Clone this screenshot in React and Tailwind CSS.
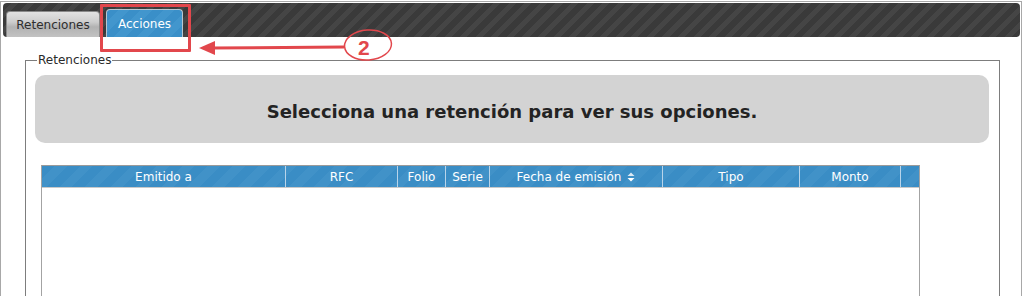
import React from 'react';

const columns = [
  { label: 'Emitido a' },
  { label: 'RFC' },
  { label: 'Folio' },
  { label: 'Serie' },
  { label: 'Fecha de emisión', sortable: true },
  { label: 'Tipo' },
  { label: 'Monto' },
  { label: '' },
];

const SortIcon = () => (
  <svg width="8" height="10" viewBox="0 0 8 10" className="ml-[6px] inline-block">
    <path d="M4 0.5 L7.5 4 L0.5 4 Z" fill="#dbe9f4" />
    <path d="M4 9.5 L7.5 6 L0.5 6 Z" fill="#ffffff" />
  </svg>
);

const Annotation = () => (
  <>
    {/* red box around the active tab */}
    <div className="absolute left-[100px] top-[4px] w-[91px] h-[48px] border-[3px] border-[#e2474c] rounded-[1px]" />
    <svg className="absolute left-0 top-0" width="420" height="70" viewBox="0 0 420 70">
      <line x1="212" y1="48" x2="344" y2="47" stroke="#e2474c" strokeWidth="3" />
      <path d="M199 48 L215 41 L215 55 Z" fill="#e2474c" />
      <ellipse cx="368" cy="45" rx="23.5" ry="15" fill="none" stroke="#e2474c" strokeWidth="1.5" transform="rotate(-4 368 45)" />
    </svg>
    <span className="absolute left-[358px] top-[36px] text-[21px] leading-[24px] font-bold text-[#e2474c] font-['Liberation_Sans',sans-serif]">
      2
    </span>
  </>
);

export default function App() {
  return (
    <div className="relative w-[1024px] h-[296px] overflow-hidden bg-white font-['DejaVu_Sans',sans-serif] text-[11px]">
      <div className="mt-px w-[1022px] h-[300px] border-l border-t border-r border-[#a8a8a8] pt-px pl-[2px] pr-px">
        {/* tab bar */}
        <div className="h-[34px] rounded-[4px] bg-[repeating-linear-gradient(135deg,#3a3a3a_0px,#3a3a3a_6px,#454545_6px,#454545_11px)] flex items-end pl-[3px] gap-[6px]">
          <div className="w-[94px] h-[26px] rounded-t-[4px] border border-b-0 border-[#8a8a8a] bg-[linear-gradient(#e2e2e2,#cdcdcd_40%,#b2b2b2_60%,#c2c2c2)] flex items-center justify-center text-[#2e2e2e] text-[12px]">
            Retenciones
          </div>
          <div className="w-[77px] h-[28px] rounded-t-[4px] border border-b-0 border-[#b9c6cf] bg-[repeating-linear-gradient(135deg,#3a8fc8_0px,#3a8fc8_8px,#4296cd_8px,#4296cd_16px)] flex items-center justify-center text-white text-[12px]">
            Acciones
          </div>
        </div>

        {/* body */}
        <div className="pl-[22px] pt-[16px]">
          <fieldset className="w-[975px] border border-[#7d7d7d] pl-[9px] pr-[10px] pb-[20px]">
            <legend className="ml-[2px] px-px text-[12px] leading-[14px] text-[#2a2a2a]">Retenciones</legend>
            <div className="mt-[8px] h-[68px] rounded-[10px] bg-[#d3d3d3] flex items-center justify-center">
              <span className="text-[18px] leading-[22px] pt-[5px] font-bold text-[#232323]">
                Selecciona una retención para ver sus opciones.
              </span>
            </div>

            <div className="mt-[22px] ml-[6px] w-[879px] h-[200px] border border-[#a3a3a3] border-t-[#9a9a9a]">
              <div className="grid grid-cols-[244px_112px_48px_44px_173px_137px_101px_1fr] h-[22px] border-b border-[#c9c9c9] bg-[repeating-linear-gradient(135deg,#3a8dc5_0px,#3a8dc5_9px,#4192c8_9px,#4192c8_18px)]">
                {columns.map((col, i) => (
                  <div
                    key={i}
                    className={
                      'flex items-center justify-center text-white text-[12px] ' +
                      (i < columns.length - 1 ? 'border-r border-[#b8d4ea]' : '')
                    }
                  >
                    {col.label}
                    {col.sortable && <SortIcon />}
                  </div>
                ))}
              </div>
            </div>
          </fieldset>
        </div>
      </div>
      <Annotation />
    </div>
  );
}
